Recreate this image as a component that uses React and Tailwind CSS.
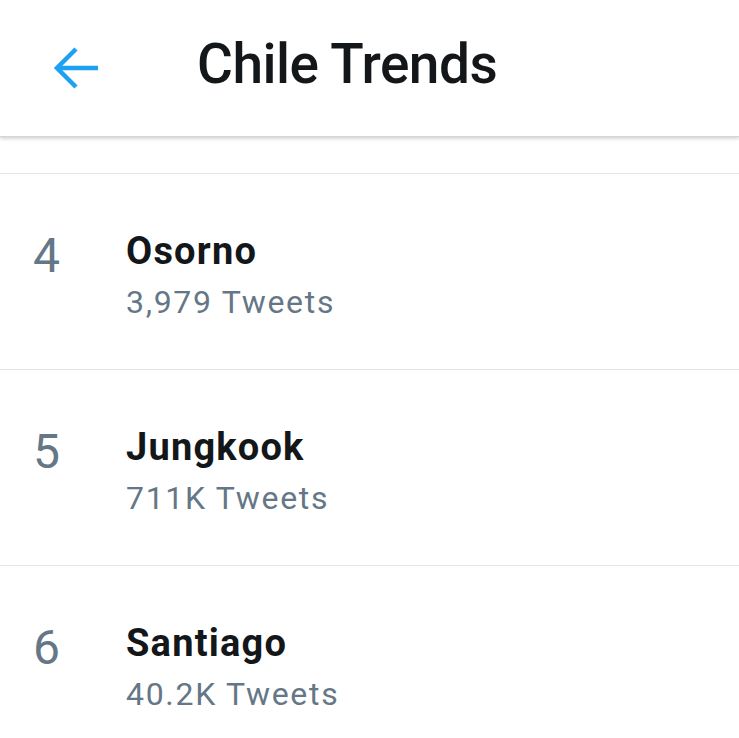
import React from "react";

const trends = [
  { rank: 4, name: "Osorno", count: "3,979 Tweets" },
  { rank: 5, name: "Jungkook", count: "711K Tweets" },
  { rank: 6, name: "Santiago", count: "40.2K Tweets" },
];

export default function App() {
  return (
    <div className="w-[739px] h-[738px] overflow-hidden bg-white" style={{ fontFamily: "Roboto, 'Noto Sans', sans-serif" }}>
      <div className="relative z-10 h-[137px] bg-white flex items-center shadow-[0_2px_3px_rgba(0,0,0,0.16)] border-b border-[#d6d6d6]">
        <div className="w-[197px] pl-[53px] flex items-center">
          <svg width="46" height="42" viewBox="0 0 46 42" fill="none" stroke="#1da1f2" strokeWidth="4.5" strokeLinecap="butt">
            <path d="M45 21H5" />
            <path d="M23 2L4 21l19 19" />
          </svg>
        </div>
        <div className="text-[55px] leading-none font-medium text-[#14171a] tracking-[-0.5px] -mt-[7px]">Chile Trends</div>
      </div>
      <div className="h-[36px]" />
      {trends.map((t) => (
        <div key={t.rank} className="h-[196px] border-t border-[#e1e5e8] flex">
          <div className="w-[126px] pl-[33px] pt-[54px] text-[48px] leading-[56px] text-[#657786]">{t.rank}</div>
          <div className="pt-[57px]">
            <div className="text-[38px] leading-[40px] font-bold text-[#14171a] tracking-[1.2px]">{t.name}</div>
            <div className="mt-[11px] text-[32px] leading-[40px] text-[#657786] tracking-[1.7px]">{t.count}</div>
          </div>
        </div>
      ))}
    </div>
  );
}
